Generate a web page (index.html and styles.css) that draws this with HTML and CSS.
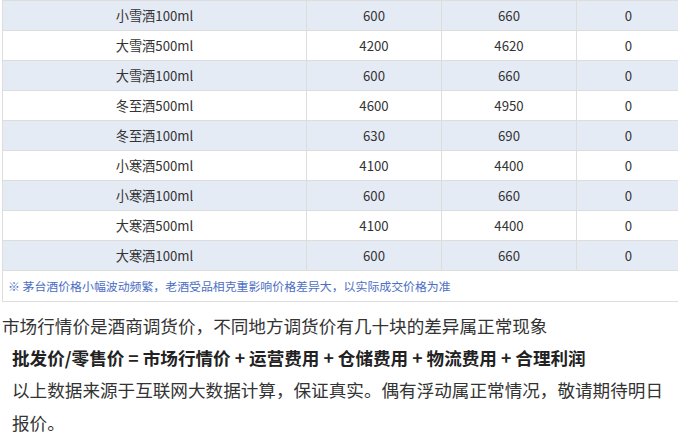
FILE: index.html
```html
<!DOCTYPE html>
<html lang="zh-CN">
<head>
<meta charset="utf-8">
<title>茅台酒价格</title>
<link rel="stylesheet" href="styles.css">
</head>
<body>
<div class="page">
  <table class="price">
    <colgroup>
      <col class="c-name"><col class="c-num"><col class="c-num"><col class="c-last">
    </colgroup>
    <tbody>
      <tr class="alt"><td>小雪酒100ml</td><td>600</td><td>660</td><td>0</td></tr>
      <tr><td>大雪酒500ml</td><td>4200</td><td>4620</td><td>0</td></tr>
      <tr class="alt"><td>大雪酒100ml</td><td>600</td><td>660</td><td>0</td></tr>
      <tr><td>冬至酒500ml</td><td>4600</td><td>4950</td><td>0</td></tr>
      <tr class="alt"><td>冬至酒100ml</td><td>630</td><td>690</td><td>0</td></tr>
      <tr><td>小寒酒500ml</td><td>4100</td><td>4400</td><td>0</td></tr>
      <tr class="alt"><td>小寒酒100ml</td><td>600</td><td>660</td><td>0</td></tr>
      <tr><td>大寒酒500ml</td><td>4100</td><td>4400</td><td>0</td></tr>
      <tr class="alt"><td>大寒酒100ml</td><td>600</td><td>660</td><td>0</td></tr>
      <tr class="note-row"><td colspan="4" class="note">※ 茅台酒价格小幅波动频繁，老酒受品相克重影响价格差异大，以实际成交价格为准</td></tr>
    </tbody>
  </table>
  <p class="lead">市场行情价是酒商调货价，不同地方调货价有几十块的差异属正常现象</p>
  <p class="formula">批发价/零售价 = 市场行情价 + 运营费用 + 仓储费用 + 物流费用 + 合理利润</p>
  <p class="source">以上数据来源于互联网大数据计算，保证真实。偶有浮动属正常情况，敬请期待明日报价。</p>
</div>
</body>
</html>
```

FILE: styles.css
```css
html, body {
  margin: 0;
  padding: 0;
  background: #ffffff;
}
body {
  font-family: "Microsoft YaHei", "Noto Sans CJK SC", "Noto Sans", sans-serif;
  color: #333333;
}
.page {
  padding-left: 2px;
  width: 680px;
}
.price {
  border-collapse: collapse;
  table-layout: fixed;
  width: 678px;
  font-size: 13.2px;
}
.c-name { width: 304px; }
.c-num { width: 135px; }
.c-last { width: 104px; }
.price td {
  border: 1px solid #dddddd;
  height: 29px;
  padding: 0;
  text-align: center;
  vertical-align: middle;
  line-height: 18px;
  color: #333333;
}
.price tr.alt td {
  background: #e5ebf5;
}
.price tr.note-row td {
  height: 30px;
}
.price td.note {
  text-align: left;
  padding-left: 5px;
  font-size: 11.9px;
  color: #4c6ec4;
}
.lead, .formula, .source {
  margin: 0;
  font-size: 17.6px;
  line-height: 33px;
  color: #333333;
}
.lead {
  margin-top: 7px;
}
.formula, .source {
  padding-left: 10px;
}
.formula {
  font-weight: bold;
  color: #222222;
  line-height: 31px;
}
.source {
  width: 662px;
}
```
